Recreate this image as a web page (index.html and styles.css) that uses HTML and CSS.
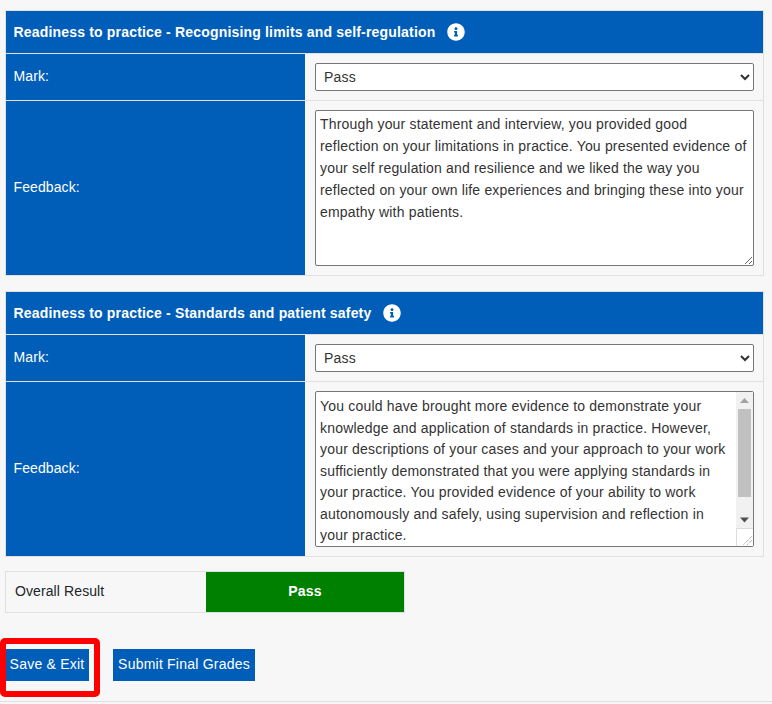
FILE: index.html
```html
<!DOCTYPE html>
<html lang="en">
<head>
<meta charset="utf-8">
<title>Readiness to practice</title>
<link rel="stylesheet" href="styles.css">
</head>
<body>
<main class="page">
  <section class="card">
    <h2 class="card-head">Readiness to practice - Recognising limits and self-regulation
      <svg class="info" viewBox="0 0 512 512"><path fill="#fff" d="M256 8C119 8 8 119 8 256s111 248 248 248 248-111 248-248S393 8 256 8zm0 110c23 0 42 19 42 42s-19 42-42 42-42-19-42-42 19-42 42-42zm56 254c0 7-5 12-12 12h-88c-7 0-12-5-12-12v-24c0-7 5-12 12-12h12v-64h-12c-7 0-12-5-12-12v-24c0-7 5-12 12-12h64c7 0 12 5 12 12v100h12c7 0 12 5 12 12v24z"/></svg>
    </h2>
    <div class="row row-mark">
      <div class="label">Mark:</div>
      <div class="field"><select class="select"><option>Pass</option></select></div>
    </div>
    <div class="row row-feedback">
      <div class="label">Feedback:</div>
      <div class="field"><textarea class="text">Through your statement and interview, you provided good reflection on your limitations in practice. You presented evidence of your self regulation and resilience and we liked the way you reflected on your own life experiences and bringing these into your empathy with patients.</textarea></div>
    </div>
  </section>
  <section class="card">
    <h2 class="card-head">Readiness to practice - Standards and patient safety
      <svg class="info" viewBox="0 0 512 512"><path fill="#fff" d="M256 8C119 8 8 119 8 256s111 248 248 248 248-111 248-248S393 8 256 8zm0 110c23 0 42 19 42 42s-19 42-42 42-42-19-42-42 19-42 42-42zm56 254c0 7-5 12-12 12h-88c-7 0-12-5-12-12v-24c0-7 5-12 12-12h12v-64h-12c-7 0-12-5-12-12v-24c0-7 5-12 12-12h64c7 0 12 5 12 12v100h12c7 0 12 5 12 12v24z"/></svg>
    </h2>
    <div class="row row-mark">
      <div class="label">Mark:</div>
      <div class="field"><select class="select"><option>Pass</option></select></div>
    </div>
    <div class="row row-feedback">
      <div class="label">Feedback:</div>
      <div class="field">
        <div class="scroll-wrap">
          <textarea class="text text-scroll">You could have brought more evidence to demonstrate your knowledge and application of standards in practice. However, your descriptions of your cases and your approach to your work sufficiently demonstrated that you were applying standards in your practice. You provided evidence of your ability to work autonomously and safely, using supervision and reflection in your practice.</textarea>
          <div class="scrollbar">
            <div class="sb-track">
              <svg class="sb-arrow" viewBox="0 0 17 17"><path fill="#a3a3a3" d="M4 11 8.500 6 13 11z"/></svg>
              <div class="sb-rail"><div class="sb-thumb"></div></div>
              <svg class="sb-arrow" viewBox="0 0 17 17"><path fill="#505050" d="M4 6.500 8.500 11.500 13 6.500z"/></svg>
            </div>
            <div class="sb-corner">
              <svg class="sb-grip" viewBox="0 0 17 17"><path fill="none" stroke="#777" stroke-dasharray="1 1" d="M7 16 16 7M11 16l5-5"/></svg>
            </div>
          </div>
        </div>
      </div>
    </div>
  </section>
  <div class="overall">
    <div class="overall-label">Overall Result</div>
    <div class="overall-value">Pass</div>
  </div>
  <div class="actions">
    <button class="btn btn-save" type="button">Save &amp; Exit</button>
    <button class="btn btn-submit" type="button">Submit Final Grades</button>
    <span class="highlight"></span>
  </div>
</main>
</body>
</html>
```
FILE: styles.css
```css
* { box-sizing: border-box; }
html, body { margin: 0; padding: 0; height: 100%; overflow: hidden; }
body {
  background: #f7f7f7;
  font-family: "Liberation Sans", Arial, sans-serif;
  font-size: 14px;
  color: #212529;
}
.page {
  height: 702px;
  padding: 10px 8px 0 5px;
  border-bottom: 1px solid #e0e0e0;
}
.card {
  border: 1px solid #e0e0e0;
  margin-bottom: 15px;
}
.card-head {
  display: flex;
  align-items: center;
  gap: 11.5px;
  height: 42px;
  margin: 0;
  padding: 0 7.5px;
  background: #005eb8;
  color: #fff;
  font-size: 14px;
  font-weight: 700;
  letter-spacing: 0.18px;
}
.info { width: 18px; height: 18px; margin-top: -1px; }
.row { display: grid; grid-template-columns: 299px 1fr; }
.row-mark { height: 47px; border-top: 1px solid #e0e0e0; }
.row-feedback { height: 175px; border-top: 1px solid #e0e0e0; }
.label {
  display: flex;
  align-items: center;
  padding: 0 0 2px 7.5px;
  background: #005eb8;
  color: #fff;
  letter-spacing: 0.1px;
}
.field { padding: 9px 9px 0 10px; }
.select {
  display: block;
  width: 100%;
  height: 28px;
  padding: 0 0 0 4px;
  background: #fff;
  border: 1px solid #767676;
  border-radius: 2px;
  font: 14px "Liberation Sans", Arial, sans-serif;
  letter-spacing: 0.2px;
  color: #333;
}
.text {
  display: block;
  width: 100%;
  height: 156px;
  padding: 2px 4px 4px;
  background: #fff;
  border: 1px solid #767676;
  border-radius: 2px;
  font: 14px/22px "Liberation Sans", Arial, sans-serif;
  letter-spacing: 0.18px;
  color: #333;
  overflow: hidden;
}
.text-scroll {
  padding: 4px 21px 4px 4px;
  line-height: 21.5px;
  letter-spacing: 0.19px;
}
.scroll-wrap { position: relative; }
.scrollbar {
  position: absolute;
  top: 1px;
  right: 1px;
  bottom: 1px;
  width: 17px;
  display: flex;
  flex-direction: column;
}
.sb-track {
  flex: 1;
  display: flex;
  flex-direction: column;
  background: #f1f1f1;
}
.sb-arrow { display: block; width: 17px; height: 17px; flex: none; }
.sb-rail { flex: 1; padding: 0 2px; }
.sb-thumb { height: 88px; background: #c1c1c1; }
.sb-corner {
  height: 18px;
  flex: none;
  background: #fff;
  border-top: 1px solid #dcdcdc;
  border-left: 1px solid #dcdcdc;
}
.sb-grip { display: block; width: 16px; height: 17px; }
.overall {
  display: grid;
  grid-template-columns: 200px 198px;
  width: 400px;
  height: 42px;
  margin-top: -1px;
  border: 1px solid #e0e0e0;
}
.overall-label {
  display: flex;
  align-items: center;
  padding: 0 0 2px 9px;
  color: #212529;
  letter-spacing: 0.1px;
}
.overall-value {
  display: flex;
  align-items: center;
  justify-content: center;
  padding-bottom: 2px;
  background: #008000;
  color: #fff;
  font-weight: 700;
  letter-spacing: 0.2px;
}
.actions {
  position: relative;
  display: flex;
  gap: 24px;
  margin-top: 36px;
}
.btn {
  height: 32px;
  padding: 0 0 2px;
  border: 0;
  background: #005eb8;
  color: #fff;
  font: 14px "Liberation Sans", Arial, sans-serif;
  letter-spacing: 0.22px;
}
.btn-save { width: 84px; }
.btn-submit { width: 142px; }
.highlight {
  position: absolute;
  left: -5px;
  top: -11px;
  width: 100px;
  height: 59px;
  border: 6px solid #f00;
  border-radius: 5px;
}
```
